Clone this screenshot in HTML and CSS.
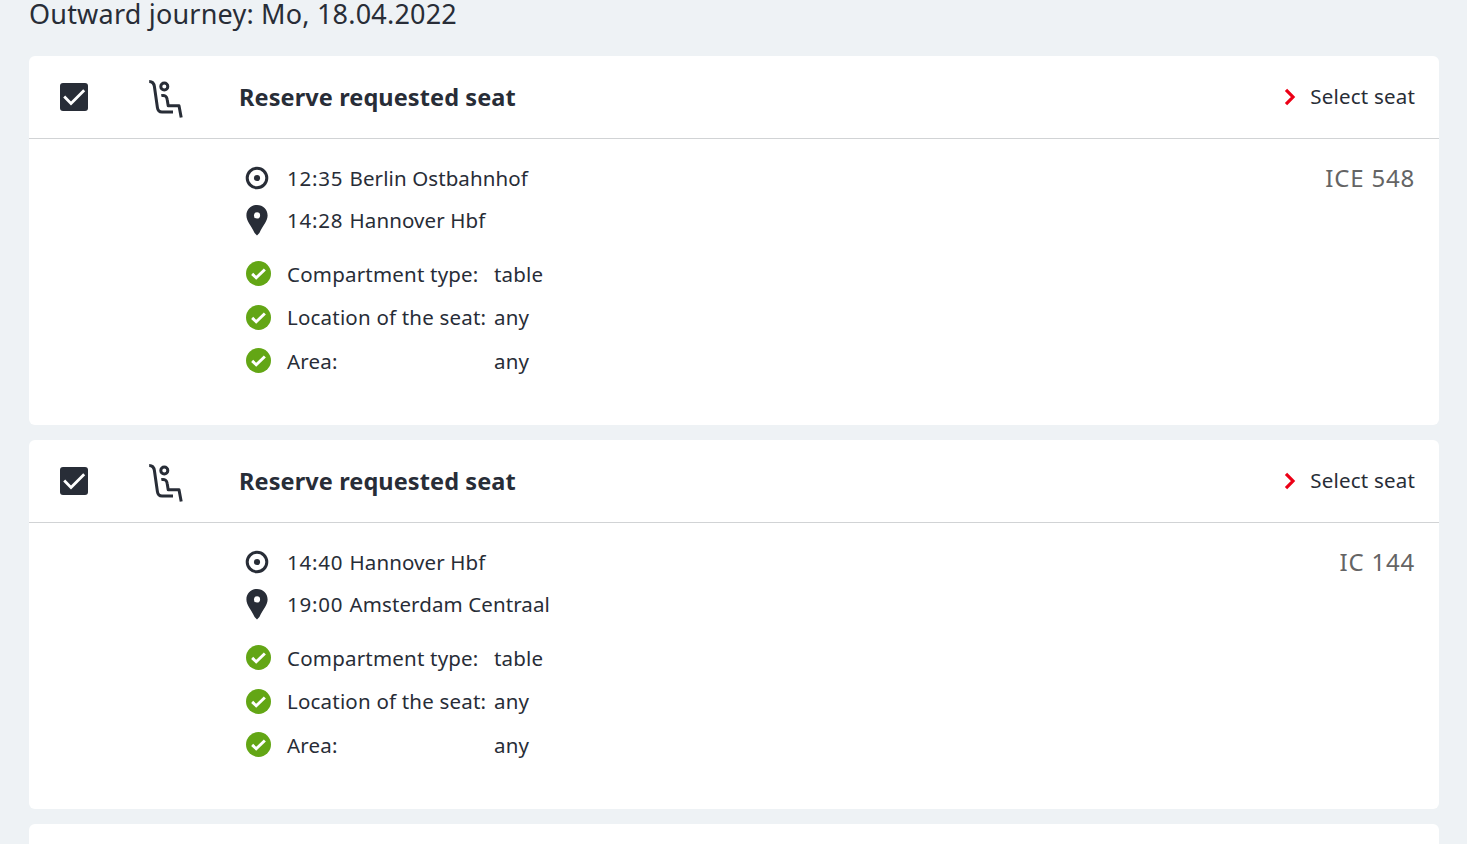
FILE: index.html
```
<!DOCTYPE html>
<html lang="en">
<head>
  <title>Seat reservation</title>
  <meta charset="utf-8">
  <link rel="stylesheet" href="styles.css">
</head>
<body>
  <svg class="symbols">
    <symbol id="icon-check" viewBox="0 0 28 28">
      <path d="M4.2 13.6l6.8 6.8L24.2 7.2" fill="none" stroke="#fff" stroke-width="2.8"/>
    </symbol>
    <symbol id="icon-seat" viewBox="0 0 36 40">
      <g fill="none" stroke="#282d37" stroke-width="3" stroke-linejoin="round">
        <path d="M1.2 2.4C5 2.4 6 4.5 6.4 7.5L9.4 28.5C9.8 31.5 11 33 14 33H25"/>
        <path d="M13.3 16.6C17 15.8 18.8 17.5 19.2 20.5L20.2 26.8H31L33.2 38.6"/>
        <circle cx="16.3" cy="7.5" r="3.5"/>
      </g>
    </symbol>
    <symbol id="icon-arrow" viewBox="0 0 12 18">
      <path d="M2 1.8l7 7.2-7 7.2" fill="none" stroke="#ec0016" stroke-width="3.2"/>
    </symbol>
    <symbol id="icon-start" viewBox="0 0 24 24">
      <circle cx="12" cy="12" r="9.8" fill="none" stroke="#282d37" stroke-width="3"/>
      <circle cx="12" cy="12" r="3.1" fill="#282d37"/>
    </symbol>
    <symbol id="icon-pin" viewBox="0 0 24 32">
      <path fill="#282d37" fill-rule="evenodd" d="M12 1C6 1 1.4 5.6 1.4 11.4C1.4 17 6 21 9.6 29L12 31.4L14.4 29C18 21 22.6 17 22.6 11.4C22.6 5.6 18 1 12 1zM12 8.3a3.1 3.1 0 1 1 0 6.2a3.1 3.1 0 1 1 0-6.2z"/>
    </symbol>
    <symbol id="icon-ok" viewBox="0 0 24 24">
      <circle cx="12" cy="12" r="12" fill="#63a615"/>
      <path d="M5.9 12.4l3.9 3.7 8.3-8" fill="none" stroke="#fff" stroke-width="2.8"/>
    </symbol>
  </svg>

  <h2 class="journey">Outward journey: Mo, 18.04.2022</h2>

  <section class="card">
    <header class="card_head">
      <span class="checkbox"><svg><use href="#icon-check"/></svg></span>
      <svg class="seat"><use href="#icon-seat"/></svg>
      <h3 class="card_title">Reserve requested seat</h3>
      <a class="select"><svg><use href="#icon-arrow"/></svg><span>Select seat</span></a>
    </header>
    <div class="card_body">
      <div class="details">
        <ul class="stops">
          <li><svg class="start"><use href="#icon-start"/></svg><span class="time">12:35</span><span class="station">Berlin Ostbahnhof</span></li>
          <li><svg class="pin"><use href="#icon-pin"/></svg><span class="time">14:28</span><span class="station">Hannover Hbf</span></li>
        </ul>
        <ul class="wishes">
          <li><svg><use href="#icon-ok"/></svg><span class="label">Compartment type:</span><span class="value">table</span></li>
          <li><svg><use href="#icon-ok"/></svg><span class="label">Location of the seat:</span><span class="value">any</span></li>
          <li><svg><use href="#icon-ok"/></svg><span class="label">Area:</span><span class="value">any</span></li>
        </ul>
      </div>
      <div class="train">ICE 548</div>
    </div>
  </section>

  <section class="card">
    <header class="card_head">
      <span class="checkbox"><svg><use href="#icon-check"/></svg></span>
      <svg class="seat"><use href="#icon-seat"/></svg>
      <h3 class="card_title">Reserve requested seat</h3>
      <a class="select"><svg><use href="#icon-arrow"/></svg><span>Select seat</span></a>
    </header>
    <div class="card_body">
      <div class="details">
        <ul class="stops">
          <li><svg class="start"><use href="#icon-start"/></svg><span class="time">14:40</span><span class="station">Hannover Hbf</span></li>
          <li><svg class="pin"><use href="#icon-pin"/></svg><span class="time">19:00</span><span class="station">Amsterdam Centraal</span></li>
        </ul>
        <ul class="wishes">
          <li><svg><use href="#icon-ok"/></svg><span class="label">Compartment type:</span><span class="value">table</span></li>
          <li><svg><use href="#icon-ok"/></svg><span class="label">Location of the seat:</span><span class="value">any</span></li>
          <li><svg><use href="#icon-ok"/></svg><span class="label">Area:</span><span class="value">any</span></li>
        </ul>
      </div>
      <div class="train">IC 144</div>
    </div>
  </section>

  <section class="card card_next"></section>
</body>
</html>
```
FILE: styles.css
```
*, ::before, ::after {
  box-sizing: border-box;
  margin: 0; padding: 0;
}

body {
  padding: 0 28px 0 29px;
  background: #eef2f5;
  color: #282d37;
  font-family: 'Noto Sans', sans-serif;
  font-size: 20.5px;
  letter-spacing: .2px;
  line-height: 30px;
}
svg {
  display: block;
  flex: none;
}
ul {
  list-style: none;
}
.symbols {
  position: absolute;
  width: 0; height: 0;
}

.journey {
  height: 56px;
  font-size: 27px; font-weight: 400;
  letter-spacing: .2px;
  line-height: 27px;
}

.card {
  height: 369px;
  margin-bottom: 15px;
  border-radius: 6px;
  background: #fff;
}
/* only the top of the next card is in view */
.card_next {
  height: 20px;
  margin-bottom: 0;
  border-radius: 6px 6px 0 0;
}
.card_head {
  display: flex;
  align-items: center;
  height: 83px;
  padding: 0 24px 0 31px;
  border-bottom: 1px solid #d1d3d5;
}
.checkbox {
  width: 28px; height: 28px;
  border-radius: 3px;
  background: #282d37;
}
.checkbox svg {
  width: 28px; height: 28px;
}
.seat {
  width: 36px; height: 40px;
  margin: 4px 0 0 60px;
}
.card_title {
  margin-left: 55px;
  font-size: 23.5px;
  letter-spacing: .1px;
}
.select {
  display: flex;
  align-items: center;
  gap: 14px;
  margin-left: auto;
}
.select svg {
  width: 12px; height: 18px;
}
.select span {
  padding-bottom: 2px;
}

.card_body {
  display: flex;
  justify-content: space-between;
  padding: 18px 24px 0 216px;
}
.stops li, .wishes li {
  display: flex;
  align-items: center;
}
.stops li {
  height: 42px;
}
.stops svg {
  width: 24px;
  margin-right: 18px;
}
.start {
  height: 24px;
}
.pin {
  height: 32px;
}
.time {
  width: 62.5px;
  letter-spacing: .75px;
}
.station {
  letter-spacing: .1px;
}
.wishes {
  margin-top: 11px;
}
.wishes li {
  height: 43.5px;
}
.wishes svg {
  width: 25px; height: 25px;
  margin: 0 16px 0 1px;
}
.label {
  width: 207px;
  white-space: nowrap;
}
.train {
  height: 42px;
  color: #646464;
  font-size: 24px;
  letter-spacing: .8px;
  line-height: 42px;
}
```
